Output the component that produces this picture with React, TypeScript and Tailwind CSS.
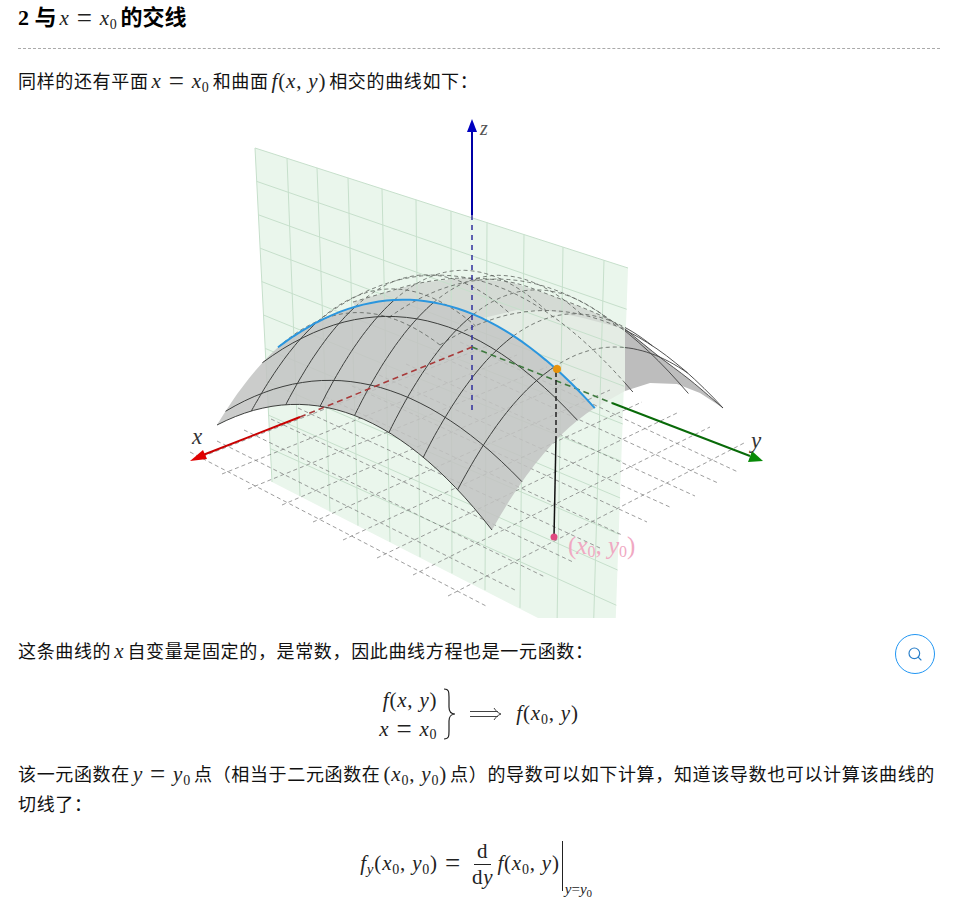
import React from "react";
import { Search } from "lucide-react";

type Pt = [number, number];

const L: Pt = [217, 425];
const F: Pt = [492, 530];
const R: Pt = [723, 408];
const B: Pt = [440, 345];
const X0 = 0.445;

// surface point, s runs along the front-left edge and t along the front-right edge
function surf(s: number, t: number): Pt {
  const w = Math.pow(t, 1.6 - 0.6 * s);
  const ax = L[0] + (F[0] - L[0]) * s;
  const ay = L[1] + (F[1] - L[1]) * s;
  const bx = B[0] + (R[0] - B[0]) * s;
  const by = B[1] + (R[1] - B[1]) * s;
  const u = 2 * s - 1;
  const v = 2 * w - 1;
  const domeT = (73 + 17 * (1 - u * u)) * (1 - 0.14 * w);
  return [ax + (bx - ax) * w, ay + (by - ay) * w - 62 * (1 - u * u) - domeT * (1 - v * v)];
}

function line(pts: Pt[]) {
  return "M" + pts.map((p) => p[0].toFixed(1) + " " + p[1].toFixed(1)).join("L");
}

// smooth curve through measured points
function smooth(pts: Pt[]) {
  let d = "M" + pts[0][0] + " " + pts[0][1];
  for (let i = 0; i < pts.length - 1; i++) {
    const a = pts[Math.max(0, i - 1)];
    const b = pts[i];
    const c = pts[i + 1];
    const e = pts[Math.min(pts.length - 1, i + 2)];
    d += `C${b[0] + (c[0] - a[0]) / 6} ${b[1] + (c[1] - a[1]) / 6} ${c[0] - (e[0] - b[0]) / 6} ${c[1] - (e[1] - b[1]) / 6} ${c[0]} ${c[1]}`;
  }
  return d;
}

function sweep(fn: (k: number) => Pt, from: number, to: number, n = 30) {
  const out: Pt[] = [];
  for (let i = 0; i <= n; i++) out.push(fn(from + ((to - from) * i) / n));
  return out;
}

const blue = sweep((s) => surf(s, X0), 0, 1, 40);
const topEdge: Pt[] = [[353, 302], [387, 292], [420, 283], [463, 278], [510, 282], [550, 295], [600, 315], [625, 329]];
const rightTop: Pt[] = [[625, 329], [657, 355], [690, 380], [723, 408]];
const rightBottom: Pt[] = [[723, 408], [700, 393], [677, 384], [650, 383], [625, 391]];
const arc: Pt[] = [[625, 329], [583, 318], [550, 311], [517, 310], [483, 318]];

const frontFill = [
  ...sweep((s) => surf(s, 0), 0, 1),
  ...sweep((t) => surf(1, t), 0, X0, 12),
  ...[...blue].reverse(),
  ...sweep((t) => surf(0, t), X0, 0, 12),
];
const blueBack = [...blue].reverse().filter((p) => p[0] >= 353);
const backFill = [...topEdge, [625, 391] as Pt, ...blueBack];
const doubleFill = [...topEdge, ...arc.slice(1), ...blueBack.filter((p) => p[0] <= 483)];
const rightFill = [...rightTop, ...rightBottom.slice(1)];

const sLines = [1, 2, 3, 4, 5, 6, 7].map((k) => k / 8);
const tLinesFront = [0.13, 0.37];
const tLinesBack = [0.61, 0.85, 1];

// plane grid, tops and bottoms of the near-vertical lines
const planeTops = [255, 287, 317, 348, 382, 416, 451, 487, 524, 563, 604];
const planeBots = [272, 300, 330, 358, 390, 420, 452, 485, 520, 557, 593];
const planeTopY = (x: number) => 148 + ((x - 255) * 120) / 373;
const planeBotY = (x: number) => 482 + ((x - 272) * 135) / 266;

const floorA: [Pt, Pt][] = [[488, 607], [517, 591], [545, 577], [573, 562], [600, 548], [622, 535], [647, 522], [672, 508], [695, 496], [718, 483], [738, 472]].map(
  (e, j) => [[190 + 27 * j, 452 - 11 * j], e as Pt]
);
const floorB: [Pt, Pt][] = [
  [[196, 459], [490, 345]],
  [[222, 474], [517, 355]],
  [[248, 489], [547, 367]],
  [[282, 505], [578, 378]],
  [[313, 522], [610, 390]],
  [[343, 540], [642, 402]],
  [[377, 558], [677, 413]],
  [[413, 575], [710, 427]],
  [[448, 596], [746, 442]],
];

function Figure() {
  return (
    <svg width="600" height="510" viewBox="179 110 600 510" className="block mx-auto mt-[15px]">
      <defs>
        <clipPath id="page">
          <rect x="179" y="110" width="600" height="508" />
        </clipPath>
        <clipPath id="inPlane">
          <rect x="179" y="110" width="446" height="508" />
        </clipPath>
        <clipPath id="outPlane">
          <rect x="625" y="110" width="154" height="508" />
        </clipPath>
      </defs>
      <g clipPath="url(#page)">
        <polygon points="255,148 628,268 615,640 538,618 272,482" fill="#eaf6ec" />
        <path d={line(backFill)} fill="#e4ece4" />
        <path d={line(doubleFill)} fill="#d4dad4" />
        <path d={line(rightFill)} fill="#bdbdbd" />

        {/* plane grid */}
        <g stroke="#c6dfcb" strokeWidth="1" fill="none">
          <path d="M255 148L628 268" />
          {planeTops.map((x, i) => (
            <path key={x} d={`M${x} ${planeTopY(x)}L${planeBots[i]} ${planeBotY(planeBots[i])}`} />
          ))}
          {[1, 2, 3, 4, 5, 6, 7, 8, 9].map((i) => {
            const lx = 255 + 1.7 * i;
            const rx = 628 - 1.3 * i;
            return <path key={i} d={`M${lx} ${148 + 33.4 * i}L${rx} ${270 + 39.5 * i - 0.25 * i * i}`} />;
          })}
        </g>

        {/* floor grid */}
        <g stroke="#707070" strokeWidth="0.8" strokeDasharray="4 3" fill="none" opacity="0.85">
          {floorA.map((l, i) => (
            <path key={i} d={line(l)} />
          ))}
          {floorB.map((l, i) => (
            <path key={i} d={line(l)} />
          ))}
        </g>

        {/* front part of the surface */}
        <path d={line(frontFill)} fill="#c2c4c2" fillOpacity="0.86" />

        {/* hidden part of the mesh */}
        <g clipPath="url(#inPlane)" stroke="#5a5f5a" strokeWidth="0.8" strokeDasharray="4 3" fill="none">
          {sLines.map((s) => (
            <path key={s} d={line(sweep((t) => surf(s, t), X0, 1))} />
          ))}
          {tLinesBack.map((t) => (
            <path key={t} d={line(sweep((s) => surf(s, t), 0, 1))} />
          ))}
          <path d={line(sweep((t) => surf(0, t), X0, 1))} />
          <path d={smooth(topEdge)} />
        </g>

        {/* part right of the plane */}
        <g clipPath="url(#outPlane)" stroke="#3f3f3f" strokeWidth="0.9" fill="none">
          {sLines.map((s) => (
            <path key={s} d={line(sweep((t) => surf(s, t), X0, 1))} />
          ))}
          {tLinesBack.map((t) => (
            <path key={t} d={line(sweep((s) => surf(s, t), 0, 1))} />
          ))}
          <path d={smooth(rightTop)} />
        </g>

        {/* visible mesh */}
        <g stroke="#3d3f3d" strokeWidth="1" fill="none">
          {sLines.map((s) => (
            <path key={s} d={line(sweep((t) => surf(s, t), 0, X0))} />
          ))}
          {tLinesFront.map((t) => (
            <path key={t} d={line(sweep((s) => surf(s, t), 0, 1))} />
          ))}
          <path d={line(sweep((s) => surf(s, 0), 0, 1))} />
        </g>

        {/* axes */}
        <path d="M472 215L472 410" stroke="#2f2f9c" strokeWidth="1.5" strokeDasharray="5 5" fill="none" />
        <path d="M472 131L472 215" stroke="#0000a6" strokeWidth="2" fill="none" />
        <polygon points="472,119 467,132 477,132" fill="#0000c0" />

        <path d="M300 417L472 347" stroke="#a83a3a" strokeWidth="1.6" strokeDasharray="6 4" fill="none" />
        <path d="M203 455L300 417" stroke="#c80000" strokeWidth="2" fill="none" />
        <polygon points="190,461 203,450 207,459" fill="#e00000" />

        <path d="M472 347L612 403" stroke="#3f7a3f" strokeWidth="1.6" strokeDasharray="6 4" fill="none" />
        <path d="M612 403L750 456" stroke="#086a08" strokeWidth="2" fill="none" />
        <polygon points="763,461 748,462 752,451" fill="#088a08" />

        {/* curve and the point on it */}
        <path d={line(blue)} stroke="#2b96de" strokeWidth="2" fill="none" />
        <path d="M556 372L556 437" stroke="#222" strokeWidth="1.5" strokeDasharray="5 3" fill="none" />
        <path d="M556 437L554 537" stroke="#111" strokeWidth="1.5" fill="none" />
        <circle cx="557" cy="369" r="4" fill="#e8930c" />
        <circle cx="554" cy="537" r="3.5" fill="#e04a80" />

        <g fontFamily="'Liberation Serif', serif" fontStyle="italic">
          <text x="192" y="444" fontSize="23" fill="#333">x</text>
          <text x="751" y="448" fontSize="23" fill="#333">y</text>
          <text x="480" y="135" fontSize="20" fill="#555">z</text>
          <text x="568" y="554" fontSize="25" fill="#f0a9c2">
            <tspan fontStyle="normal">(</tspan>x<tspan fontSize="16" dy="3" fontStyle="normal">0</tspan>
            <tspan dy="-3">, y</tspan>
            <tspan fontSize="16" dy="3" fontStyle="normal">0</tspan>
            <tspan dy="-3" fontStyle="normal">)</tspan>
          </text>
        </g>
      </g>
    </svg>
  );
}

function I({ children }: { children: React.ReactNode }) {
  return <span className="italic">{children}</span>;
}

function Math_({ children }: { children: React.ReactNode }) {
  return <span className="font-['Liberation_Serif',serif] text-[21px] leading-none tracking-[0.8px] font-normal text-[#222] mx-[3px]">{children}</span>;
}

function Eq() {
  return <span className="inline-block mx-[7px] text-[27px] leading-none translate-y-[2px]">=</span>;
}

const X00 = (
  <>
    <I>x</I>
    <sub className="text-[14px]">0</sub>
  </>
);

const Y00 = (
  <>
    <I>y</I>
    <sub className="text-[14px]">0</sub>
  </>
);

export default function App() {
  return (
    <div className="relative h-[908px] overflow-hidden bg-white px-[18px] pr-[26px] text-[#111] font-['Liberation_Serif','Noto_Sans_CJK_SC',serif]">
      <h2 className="h-[49px] pt-0 border-b border-dashed border-[#aaa] text-[22px] leading-[36px] font-bold text-black">
        2 与<Math_>
          <I>x</I>
          <Eq />
          {X00}
        </Math_>的交线
      </h2>

      <p className="mt-[16px] text-[18px] leading-[30px] tracking-[0.65px] font-['Noto_Sans_CJK_SC',sans-serif]">
        同样的还有平面<Math_>
          <I>x</I>
          <Eq />
          {X00}
        </Math_>和曲面<Math_>
          <I>f</I>(<I>x</I>, <I>y</I>)
        </Math_>相交的曲线如下：
      </p>

      <Figure />

      <p className="mt-[15px] text-[18px] leading-[30px] tracking-[0.65px] font-['Noto_Sans_CJK_SC',sans-serif]">
        这条曲线的<Math_>
          <I>x</I>
        </Math_>自变量是固定的，是常数，因此曲线方程也是一元函数：
      </p>

      <div className="mt-[18px] h-[62px] flex items-center justify-center font-['Liberation_Serif',serif] text-[21px] tracking-[0.8px] text-[#222]">
        <div className="flex flex-col items-end leading-[28px]">
          <div>
            <I>f</I>(<I>x</I>, <I>y</I>)
          </div>
          <div>
            <I>x</I>
            <Eq />
            {X00}
          </div>
        </div>
        <svg width="16" height="52" viewBox="0 0 16 52" className="ml-[5px]" fill="none" stroke="#222" strokeWidth="1.2">
          <path d="M2 1C7 1 7 4 7 9L7 19C7 23 9 26 13 26C9 26 7 29 7 33L7 43C7 48 7 51 2 51" />
        </svg>
        <svg width="32" height="14" viewBox="0 0 32 14" className="ml-[12px]" fill="none" stroke="#444" strokeWidth="1">
          <path d="M0 4.5L28 4.5M0 9.5L28 9.5M24 1C26 4 28 6 31 7C28 8 26 10 24 13" />
        </svg>
        <span className="ml-[14px]">
          <I>f</I>({X00}, <I>y</I>)
        </span>
      </div>

      <p className="mt-[13px] text-[18px] leading-[30px] tracking-[0.65px] font-['Noto_Sans_CJK_SC',sans-serif]">
        该一元函数在<Math_>
          <I>y</I>
          <Eq />
          {Y00}
        </Math_>点（相当于二元函数在<Math_>
          ({X00}, {Y00})
        </Math_>点）的导数可以如下计算，知道该导数也可以计算该曲线的切线了：
      </p>

      <div className="mt-[16px] h-[60px] flex items-center justify-center font-['Liberation_Serif',serif] text-[21px] tracking-[0.8px] text-[#222]">
        <span>
          <I>f</I>
          <sub className="text-[15px]">
            <I>y</I>
          </sub>
          ({X00}, {Y00})
          <Eq />
        </span>
        <span className="mx-[4px] flex flex-col items-center leading-[25px]">
          <span className="px-[3px] border-b border-[#222]">d</span>
          <span>
            d<I>y</I>
          </span>
        </span>
        <span>
          <I>f</I>({X00}, <I>y</I>)
        </span>
        <span className="relative ml-[2px] h-[50px] w-[36px] border-l border-[#222] self-start mt-[7px]">
          <span className="absolute left-[2px] bottom-[-6px] text-[15px] tracking-normal leading-none whitespace-nowrap">
            <I>y</I>=<I>y</I>
            <sub className="text-[11px]">0</sub>
          </span>
        </span>
      </div>

      <button className="absolute left-[895px] top-[634px] w-[40px] h-[40px] rounded-full border border-[#2196f3] bg-white flex items-center justify-center">
        <Search size={16} color="#2a7fc9" strokeWidth={1.75} />
      </button>
    </div>
  );
}
